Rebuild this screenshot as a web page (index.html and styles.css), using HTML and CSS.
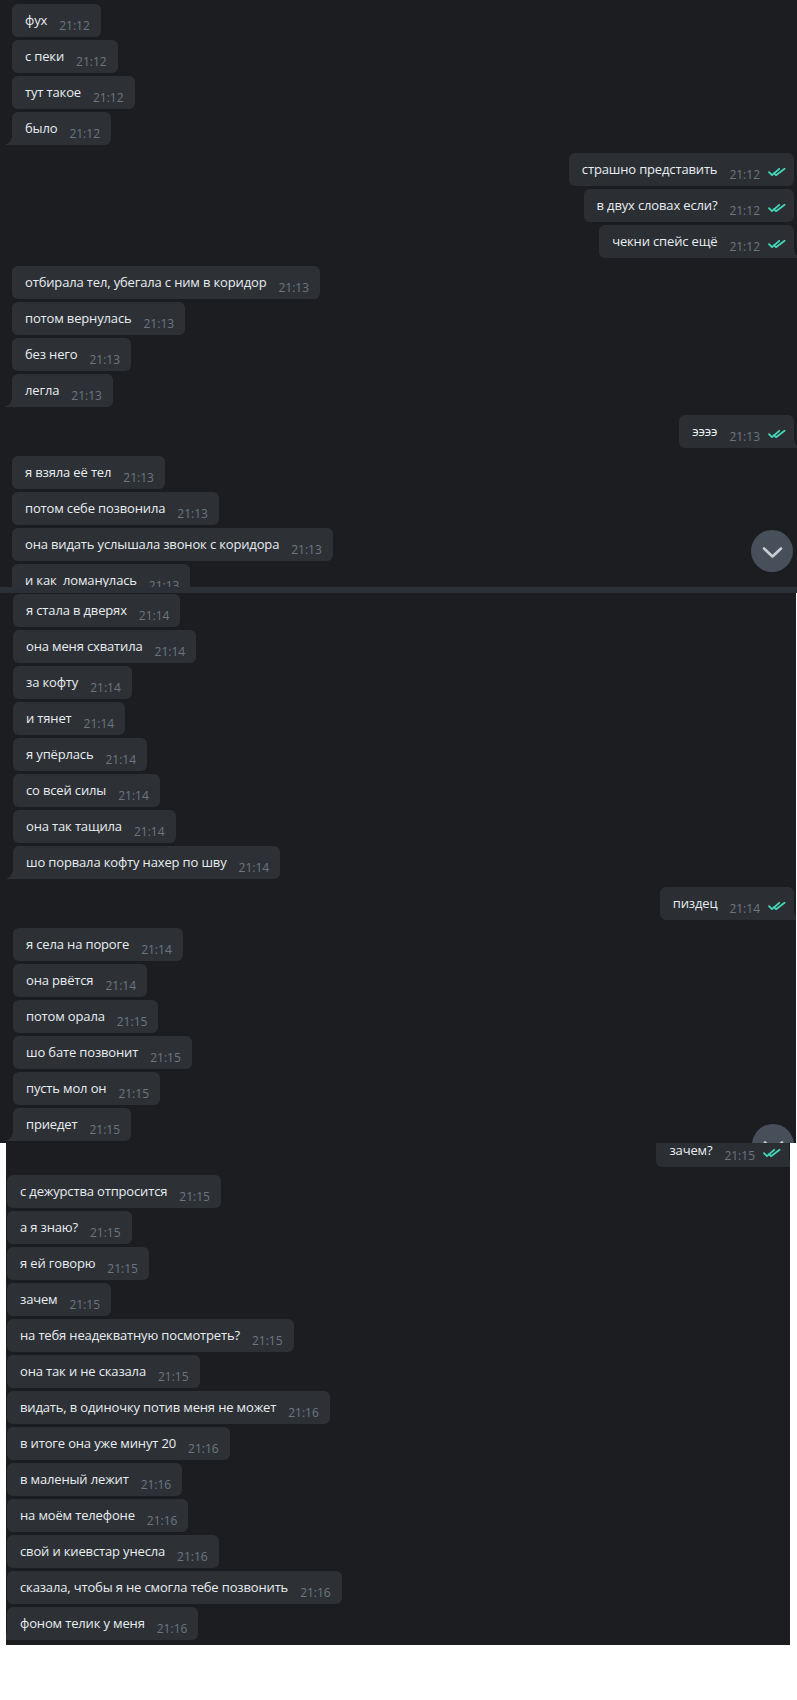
FILE: index.html
```html
<!DOCTYPE html>
<html lang="ru">
<head>
<meta charset="utf-8">
<title>Chat</title>
<link rel="stylesheet" href="styles.css">
</head>
<body>
<div class="shot s1">
  <div class="row"><div class="b">фух<span class="t">21:12</span></div></div>
  <div class="row"><div class="b">с пеки<span class="t">21:12</span></div></div>
  <div class="row"><div class="b">тут такое<span class="t">21:12</span></div></div>
  <div class="row"><div class="b tail">было<span class="t">21:12</span></div></div>

  <div class="row out gap"><div class="b">страшно представить<span class="t">21:12</span><svg class="ck" viewBox="0 0 18 8"><path d="M1 4.2 L4 7.2 L11.2 0.8"/><path d="M6 5.2 L8 7.2 L16.6 0.8"/></svg></div></div>
  <div class="row out"><div class="b">в двух словах если?<span class="t">21:12</span><svg class="ck" viewBox="0 0 18 8"><path d="M1 4.2 L4 7.2 L11.2 0.8"/><path d="M6 5.2 L8 7.2 L16.6 0.8"/></svg></div></div>
  <div class="row out"><div class="b tail">чекни спейс ещё<span class="t">21:12</span><svg class="ck" viewBox="0 0 18 8"><path d="M1 4.2 L4 7.2 L11.2 0.8"/><path d="M6 5.2 L8 7.2 L16.6 0.8"/></svg></div></div>

  <div class="row gap"><div class="b">отбирала тел, убегала с ним в коридор<span class="t">21:13</span></div></div>
  <div class="row"><div class="b">потом вернулась<span class="t">21:13</span></div></div>
  <div class="row"><div class="b">без него<span class="t">21:13</span></div></div>
  <div class="row"><div class="b tail">легла<span class="t">21:13</span></div></div>

  <div class="row out gap"><div class="b tail">ээээ<span class="t">21:13</span><svg class="ck" viewBox="0 0 18 8"><path d="M1 4.2 L4 7.2 L11.2 0.8"/><path d="M6 5.2 L8 7.2 L16.6 0.8"/></svg></div></div>

  <div class="row gap"><div class="b">я взяла её тел<span class="t">21:13</span></div></div>
  <div class="row"><div class="b">потом себе позвонила<span class="t">21:13</span></div></div>
  <div class="row"><div class="b">она видать услышала звонок с коридора<span class="t">21:13</span></div></div>
  <div class="row"><div class="b">и как&nbsp; ломанулась<span class="t">21:13</span></div></div>

  <div class="down d1"><svg viewBox="0 0 42 42"><path d="M13 18.5 L21.5 26.5 L30 18.5"/></svg></div>
</div>
<div class="sep"></div>
<div class="shot s2">
  <div class="row"><div class="b">я стала в дверях<span class="t">21:14</span></div></div>
  <div class="row"><div class="b">она меня схватила<span class="t">21:14</span></div></div>
  <div class="row"><div class="b">за кофту<span class="t">21:14</span></div></div>
  <div class="row"><div class="b">и тянет<span class="t">21:14</span></div></div>
  <div class="row"><div class="b">я упёрлась<span class="t">21:14</span></div></div>
  <div class="row"><div class="b">со всей силы<span class="t">21:14</span></div></div>
  <div class="row"><div class="b">она так тащила<span class="t">21:14</span></div></div>
  <div class="row"><div class="b tail">шо порвала кофту нахер по шву<span class="t">21:14</span></div></div>

  <div class="row out gap"><div class="b tail">пиздец<span class="t">21:14</span><svg class="ck" viewBox="0 0 18 8"><path d="M1 4.2 L4 7.2 L11.2 0.8"/><path d="M6 5.2 L8 7.2 L16.6 0.8"/></svg></div></div>

  <div class="row gap"><div class="b">я села на пороге<span class="t">21:14</span></div></div>
  <div class="row"><div class="b">она рвётся<span class="t">21:14</span></div></div>
  <div class="row"><div class="b">потом орала<span class="t">21:15</span></div></div>
  <div class="row"><div class="b">шо бате позвонит<span class="t">21:15</span></div></div>
  <div class="row"><div class="b">пусть мол он<span class="t">21:15</span></div></div>
  <div class="row"><div class="b tail">приедет<span class="t">21:15</span></div></div>

  <div class="down d2"><svg viewBox="0 0 42 42"><path d="M13 18.5 L21.5 26.5 L30 18.5"/></svg></div>
</div>
<div class="shot s3">
  <div class="row out first"><div class="b tail">зачем?<span class="t">21:15</span><svg class="ck" viewBox="0 0 18 8"><path d="M1 4.2 L4 7.2 L11.2 0.8"/><path d="M6 5.2 L8 7.2 L16.6 0.8"/></svg></div></div>

  <div class="row gap"><div class="b">с дежурства отпросится<span class="t">21:15</span></div></div>
  <div class="row"><div class="b">а я знаю?<span class="t">21:15</span></div></div>
  <div class="row"><div class="b">я ей говорю<span class="t">21:15</span></div></div>
  <div class="row"><div class="b">зачем<span class="t">21:15</span></div></div>
  <div class="row"><div class="b">на тебя неадекватную посмотреть?<span class="t">21:15</span></div></div>
  <div class="row"><div class="b">она так и не сказала<span class="t">21:15</span></div></div>
  <div class="row"><div class="b">видать, в одиночку потив меня не может<span class="t">21:16</span></div></div>
  <div class="row"><div class="b">в итоге она уже минут 20<span class="t">21:16</span></div></div>
  <div class="row"><div class="b">в маленый лежит<span class="t">21:16</span></div></div>
  <div class="row"><div class="b">на моём телефоне<span class="t">21:16</span></div></div>
  <div class="row"><div class="b">свой и киевстар унесла<span class="t">21:16</span></div></div>
  <div class="row"><div class="b">сказала, чтобы я не смогла тебе позвонить<span class="t">21:16</span></div></div>
  <div class="row"><div class="b tail">фоном телик у меня<span class="t">21:16</span></div></div>
</div>
</body>
</html>
```
FILE: styles.css
```css
html, body {
  margin: 0;
  padding: 0;
  background: #ffffff;
}

body {
  font-family: "Open Sans", "Noto Sans", "DejaVu Sans", sans-serif;
  -webkit-font-smoothing: antialiased;
}

.shot {
  background: #1b1d21;
  overflow: hidden;
  position: relative;
  box-sizing: border-box;
}

.s1 {
  height: 587px;
  padding: 4px 3px 0 12px;
}

.sep {
  height: 6px;
  background: #2a3036;
}

.s2 {
  height: 550px;
  width: 796px;
  padding: 1px 2px 0 13px;
}

.s3 {
  height: 502px;
  width: 784px;
  margin-left: 6px;
  padding: 0 1px 0 1px;
}

.row {
  display: flex;
  margin-top: 3px;
}

.row:first-child {
  margin-top: 0;
}

.row.gap {
  margin-top: 8px;
}

.row.first {
  margin-top: -9px;
}

.row.out {
  justify-content: flex-end;
}

.b {
  position: relative;
  height: 33px;
  box-sizing: border-box;
  padding: 7px 11px 0 13px;
  border-radius: 6px;
  background: #2d3136;
  color: #e8edf1;
  font-size: 13px;
  line-height: 18px;
  letter-spacing: -0.15px;
  white-space: nowrap;
}

.out .b {
  background: #2b2f34;
  padding-right: 8px;
}

.t {
  display: inline-block;
  margin-left: 12px;
  font-size: 12px;
  line-height: 12px;
  letter-spacing: 0;
  color: #6b7681;
  vertical-align: -5px;
}

.ck {
  display: inline-block;
  width: 18px;
  height: 8px;
  margin-left: 8px;
  vertical-align: -2px;
  fill: none;
  stroke: #44d6b6;
  stroke-width: 1.8;
  stroke-linecap: round;
  stroke-linejoin: round;
}

.b.tail {
  border-bottom-left-radius: 0;
}

.b.tail::before {
  content: "";
  position: absolute;
  left: -6px;
  bottom: 0;
  width: 6px;
  height: 10px;
  background: radial-gradient(ellipse 6px 9px at 0 0, rgba(0,0,0,0) 96%, #2d3136 100%);
}

.out .b.tail {
  border-bottom-left-radius: 6px;
  border-bottom-right-radius: 0;
}

.out .b.tail::before {
  left: auto;
  right: -6px;
  background: radial-gradient(ellipse 6px 9px at 100% 0, rgba(0,0,0,0) 96%, #2b2f34 100%);
}

.down {
  position: absolute;
  width: 42px;
  height: 42px;
  border-radius: 50%;
  background: #47505a;
}

.down svg {
  width: 42px;
  height: 42px;
  fill: none;
  stroke: #c9ced3;
  stroke-width: 2.6;
  stroke-linecap: round;
  stroke-linejoin: round;
}

.d1 {
  left: 751px;
  top: 530px;
}

.d2 {
  left: 752px;
  top: 531px;
}
```
